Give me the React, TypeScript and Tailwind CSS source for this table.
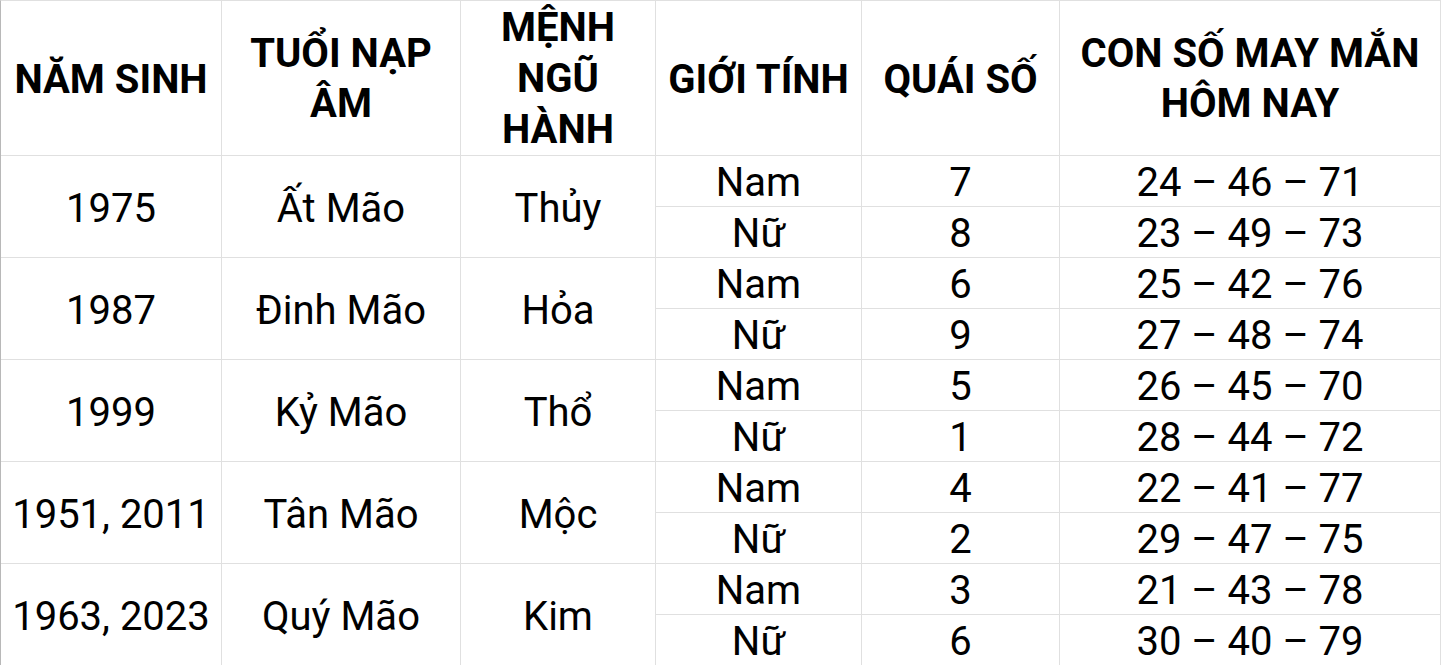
import React from "react";

const groups = [
  { year: "1975", tuoi: "Ất Mão", menh: "Thủy", rows: [["Nam", "7", "24 – 46 – 71"], ["Nữ", "8", "23 – 49 – 73"]] },
  { year: "1987", tuoi: "Đinh Mão", menh: "Hỏa", rows: [["Nam", "6", "25 – 42 – 76"], ["Nữ", "9", "27 – 48 – 74"]] },
  { year: "1999", tuoi: "Kỷ Mão", menh: "Thổ", rows: [["Nam", "5", "26 – 45 – 70"], ["Nữ", "1", "28 – 44 – 72"]] },
  { year: "1951, 2011", tuoi: "Tân Mão", menh: "Mộc", rows: [["Nam", "4", "22 – 41 – 77"], ["Nữ", "2", "29 – 47 – 75"]] },
  { year: "1963, 2023", tuoi: "Quý Mão", menh: "Kim", rows: [["Nam", "3", "21 – 43 – 78"], ["Nữ", "6", "30 – 40 – 79"]] },
];

const cell = "flex items-center justify-center text-center border-r border-b border-[#e0e0e0]";
const data = `${cell} text-[40px] leading-none pt-[4px]`;

export default function App() {
  return (
    <div className="w-[1441px] h-[665px] overflow-hidden bg-white text-black" style={{ fontFamily: "Roboto, 'Noto Sans', sans-serif" }}>
      <div className="border-l border-[#b8b8b8] border-t border-t-[#e0e0e0] grid grid-cols-[221px_239px_195px_206px_198px_1fr] grid-rows-[155px_repeat(10,51px)]">
        <div className={`${cell} font-bold text-[40px] leading-[50px] pt-[3px]`}>NĂM SINH</div>
        <div className={`${cell} font-bold text-[40px] leading-[50px] pt-[2px]`}>TUỔI NẠP<br />ÂM</div>
        <div className={`${cell} font-bold text-[40px] leading-[51px]`}>MỆNH<br />NGŨ<br />HÀNH</div>
        <div className={`${cell} font-bold text-[40px] leading-[50px] pt-[3px]`}>GIỚI TÍNH</div>
        <div className={`${cell} font-bold text-[40px] leading-[50px] pt-[3px]`}>QUÁI SỐ</div>
        <div className={`${cell} font-bold text-[40px] leading-[50px] pt-[2px]`}>CON SỐ MAY MẮN<br />HÔM NAY</div>
        {groups.map((g) => (
          <React.Fragment key={g.year}>
            <div className={`${data} row-span-2`}>{g.year}</div>
            <div className={`${data} row-span-2`}>{g.tuoi}</div>
            <div className={`${data} row-span-2`}>{g.menh}</div>
            <div className={data}>{g.rows[0][0]}</div>
            <div className={data}>{g.rows[0][1]}</div>
            <div className={data}>{g.rows[0][2]}</div>
            <div className={data}>{g.rows[1][0]}</div>
            <div className={data}>{g.rows[1][1]}</div>
            <div className={data}>{g.rows[1][2]}</div>
          </React.Fragment>
        ))}
      </div>
    </div>
  );
}
